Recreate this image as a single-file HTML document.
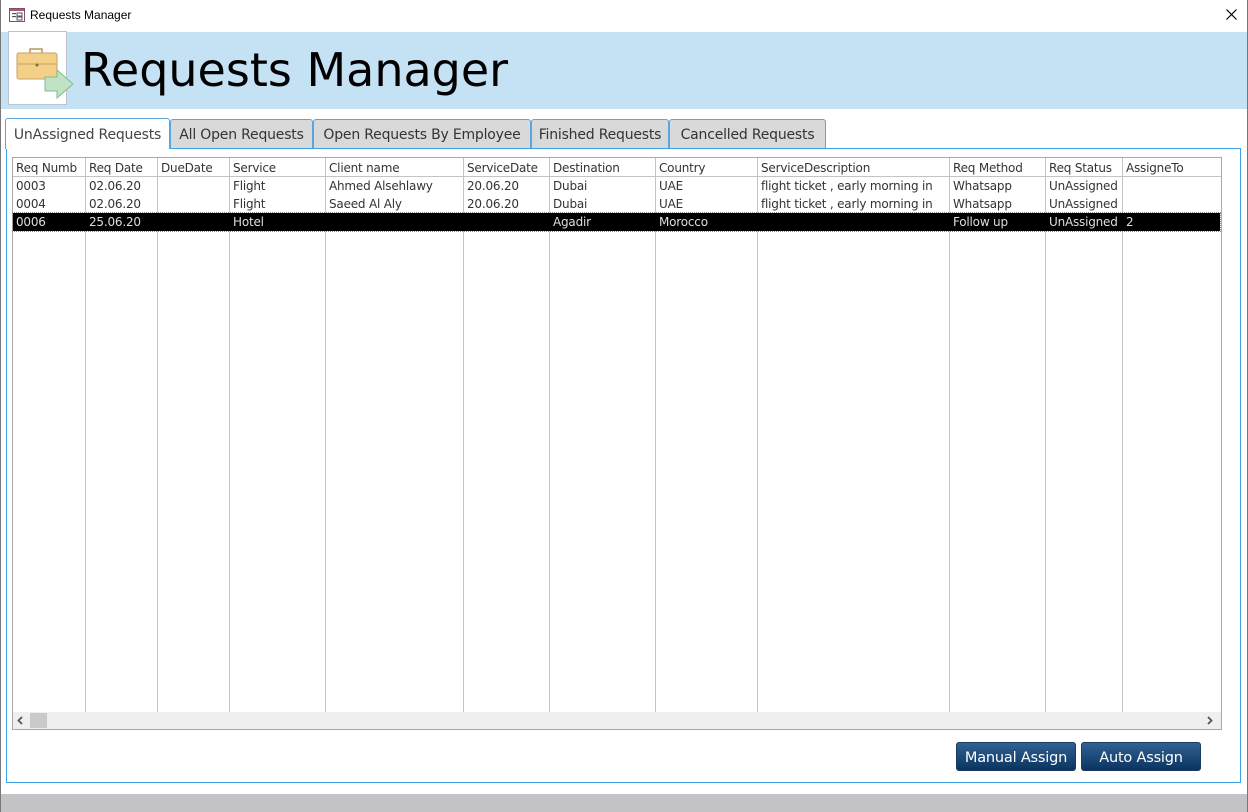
<!DOCTYPE html>
<html><head><meta charset="utf-8"><style>
*{margin:0;padding:0;box-sizing:border-box}
body{width:1248px;height:812px;background:#fff;position:relative;overflow:hidden;font-family:"DejaVu Sans","Liberation Sans",sans-serif;color:#222}
.a{position:absolute}
.tab{position:absolute;top:119px;height:29px;background:#d9d9d9;border:1px solid #5aa6dc;border-bottom:none;border-radius:3px 3px 0 0;font-size:14px;line-height:30px;text-align:center;color:#333;white-space:nowrap;overflow:hidden;letter-spacing:-0.2px}
.cell{position:absolute;font-size:12px;line-height:20px;white-space:nowrap;overflow:hidden;padding-left:3px;color:#333;letter-spacing:-0.2px}
.vl{position:absolute;top:158px;width:1px;height:554px;background:#c4c4c4}
.btn{position:absolute;top:742px;height:29px;border-radius:3px;background:linear-gradient(#2f6192,#0c3460);border:1px solid #1a3c64;color:#fff;font-size:14.5px;line-height:31px;text-align:center;letter-spacing:-0.2px}
</style></head><body>
<div class="a" style="left:0;top:0;width:1px;height:812px;background:#777"></div>
<div class="a" style="right:0;top:0;width:1px;height:812px;background:#777"></div>
<svg class="a" style="left:9px;top:8px" width="16" height="14"><rect x="0.5" y="0.5" width="15" height="13" fill="#fff" stroke="#8a4a6a"/><rect x="1" y="1" width="14" height="2" fill="#a05a7a"/><rect x="3" y="5" width="4" height="1.2" fill="#556"/><rect x="8" y="5" width="5" height="3" fill="none" stroke="#556"/><rect x="3" y="8" width="4" height="1.2" fill="#556"/><rect x="8" y="9" width="5" height="3" fill="none" stroke="#556"/></svg>
<div class="a" style="left:30px;top:8px;font-size:12px;font-family:'Liberation Sans',sans-serif;color:#000">Requests Manager</div>
<svg class="a" style="left:1226px;top:9px" width="11" height="11"><path d="M0.5 0.5L10.5 10.5M10.5 0.5L0.5 10.5" stroke="#000" stroke-width="1.2"/></svg>
<div class="a" style="left:1px;top:32px;width:1246px;height:77px;background:#c5e1f4"></div>
<div class="a" style="left:8px;top:31px;width:59px;height:74px;background:#fff;border:1px solid #b8c4d0"></div>
<svg class="a" style="left:14px;top:44px" width="64" height="58"><path d="M16 9v-4h12v4" fill="none" stroke="#b8955a" stroke-width="1.5"/><rect x="3" y="9" width="40" height="26" rx="2" fill="#f4cf88" stroke="#c9a263"/><path d="M3 20h40" stroke="#c9a263"/><circle cx="23" cy="21" r="1.5" fill="#8a6a3a"/><path d="M31 33h12v-7l16 14-16 14v-7h-12z" fill="#bfe3c4" stroke="#7fbf8a"/></svg>
<div class="a" style="left:81px;top:40px;font-size:46px;line-height:60px;color:#000">Requests Manager</div>
<div class="a" style="left:6px;top:148px;width:1235px;height:635px;border:1px solid #3da2e6"></div>
<div class="tab" style="left:5px;top:118px;width:165px;height:31px;background:#fff;color:#444;line-height:33px">UnAssigned Requests</div>
<div class="tab" style="left:170px;width:143px">All Open Requests</div>
<div class="tab" style="left:313px;width:218px">Open Requests By Employee</div>
<div class="tab" style="left:531px;width:138px">Finished Requests</div>
<div class="tab" style="left:669px;width:157px">Cancelled Requests</div>
<div class="a" style="left:12px;top:157px;width:1210px;height:573px;border:1px solid #a8a8a8;background:#fff"></div>
<div class="a" style="left:13px;top:176px;width:1208px;height:1px;background:#c4c4c4"></div>
<div class="vl" style="left:85px"></div><div class="vl" style="left:157px"></div><div class="vl" style="left:229px"></div><div class="vl" style="left:325px"></div><div class="vl" style="left:463px"></div><div class="vl" style="left:549px"></div><div class="vl" style="left:655px"></div><div class="vl" style="left:757px"></div><div class="vl" style="left:949px"></div><div class="vl" style="left:1045px"></div><div class="vl" style="left:1122px"></div>
<div class="a" style="left:13px;top:213px;width:1207px;height:18px;background:#000;outline:1px dotted #888"></div>
<div id="rows"></div>
<script>
var xs=[13,86,158,230,326,464,550,656,758,950,1046,1123,1220];
var rows=[["Req Numb","Req Date","DueDate","Service","Client name","ServiceDate","Destination","Country","ServiceDescription","Req Method","Req Status","AssigneTo"],
["0003","02.06.20","","Flight","Ahmed Alsehlawy","20.06.20","Dubai","UAE","flight ticket  , early morning in","Whatsapp","UnAssigned",""],
["0004","02.06.20","","Flight","Saeed Al Aly","20.06.20","Dubai","UAE","flight ticket  , early morning in","Whatsapp","UnAssigned",""],
["0006","25.06.20","","Hotel","","","Agadir","Morocco","","Follow up","UnAssigned","2"]];
var h="";rows.forEach(function(r,i){r.forEach(function(t,j){h+='<div class="cell" style="left:'+xs[j]+'px;top:'+(158+i*18)+'px;height:18px;width:'+(xs[j+1]-xs[j]-1)+'px;'+(i==3?'color:#ddd':'')+'">'+t+'</div>'})});
document.getElementById('rows').innerHTML=h;
</script>
<div class="a" style="left:13px;top:712px;width:1208px;height:17px;background:#efefef"></div>
<div class="a" style="left:30px;top:713px;width:17px;height:15px;background:#cacaca"></div>
<svg class="a" style="left:17px;top:716px" width="6" height="9"><path d="M5 1L1.5 4.5L5 8" fill="none" stroke="#555" stroke-width="1.8"/></svg>
<svg class="a" style="left:1207px;top:716px" width="6" height="9"><path d="M1 1L4.5 4.5L1 8" fill="none" stroke="#555" stroke-width="1.8"/></svg>
<div class="btn" style="left:956px;width:120px">Manual Assign</div>
<div class="btn" style="left:1081px;width:120px">Auto Assign</div>
<div class="a" style="left:1px;top:794px;width:1246px;height:18px;background:#c4c4c8"></div>
</body></html>
